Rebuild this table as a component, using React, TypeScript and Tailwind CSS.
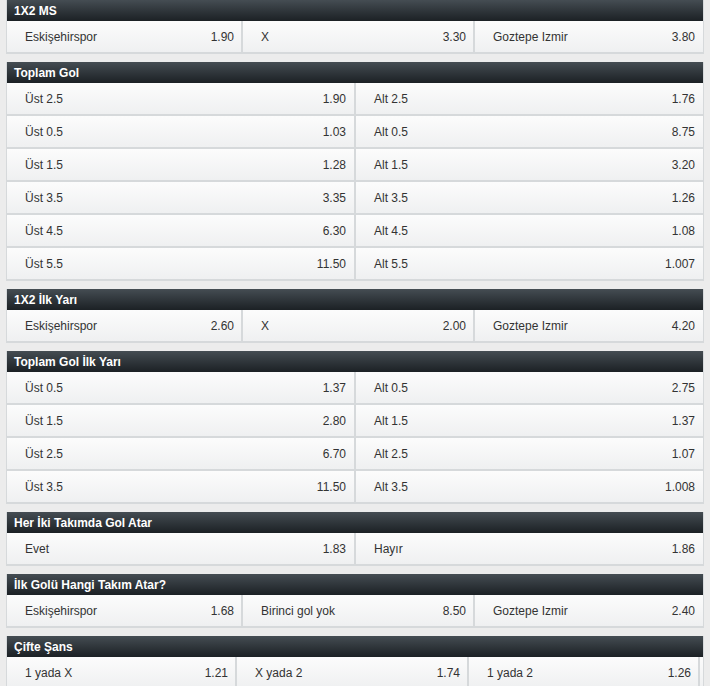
import React from "react";

type Cell = { label: string; odd: string };

const Header = ({ title }: { title: string }) => (
  <div className="h-[21px] flex items-center pl-[7px] bg-gradient-to-b from-[#454d53] to-[#1c2125] text-white font-bold text-[12px] leading-none">
    {title}
  </div>
);

const CellView = ({ c, cls }: { c: Cell; cls: string }) => (
  <div className={"flex items-center justify-between pl-[18px] pr-[7px] " + cls}>
    <span>{c.label}</span>
    <span>{c.odd}</span>
  </div>
);

const Row3 = ({ cells, alt }: { cells: Cell[]; alt?: boolean }) => (
  <div className="flex h-[33px] border-b-2 border-[#d6d9db] bg-gradient-to-b from-[#fcfcfc] to-[#eff0f1]">
    {alt ? (
      <>
        <CellView c={cells[0]} cls="w-[230px] border-r-2 border-[#d6d9db]" />
        <CellView c={cells[1]} cls="w-[232px] border-r-2 border-[#d6d9db]" />
        <CellView c={cells[2]} cls="w-[231px] border-r-2 border-[#d6d9db]" />
        <div className="flex-1" />
      </>
    ) : (
      <>
        <CellView c={cells[0]} cls="w-[236px] border-r-2 border-[#d6d9db]" />
        <CellView c={cells[1]} cls="w-[232px] border-r-2 border-[#d6d9db]" />
        <CellView c={cells[2]} cls="flex-1 pr-[8px]" />
      </>
    )}
  </div>
);

const Row2 = ({ a, b }: { a: Cell; b: Cell }) => (
  <div className="flex h-[33px] border-b-2 border-[#d6d9db] bg-gradient-to-b from-[#fcfcfc] to-[#eff0f1]">
    <CellView c={a} cls="w-[349px] border-r-2 border-[#d6d9db] pr-[8px]" />
    <CellView c={b} cls="flex-1 pr-[8px]" />
  </div>
);

const c = (label: string, odd: string): Cell => ({ label, odd });

export default function App() {
  const toplam: [Cell, Cell][] = [
    [c("Üst 2.5", "1.90"), c("Alt 2.5", "1.76")],
    [c("Üst 0.5", "1.03"), c("Alt 0.5", "8.75")],
    [c("Üst 1.5", "1.28"), c("Alt 1.5", "3.20")],
    [c("Üst 3.5", "3.35"), c("Alt 3.5", "1.26")],
    [c("Üst 4.5", "6.30"), c("Alt 4.5", "1.08")],
    [c("Üst 5.5", "11.50"), c("Alt 5.5", "1.007")],
  ];
  const ilkYari: [Cell, Cell][] = [
    [c("Üst 0.5", "1.37"), c("Alt 0.5", "2.75")],
    [c("Üst 1.5", "2.80"), c("Alt 1.5", "1.37")],
    [c("Üst 2.5", "6.70"), c("Alt 2.5", "1.07")],
    [c("Üst 3.5", "11.50"), c("Alt 3.5", "1.008")],
  ];
  return (
    <div
      className="w-[710px] h-[686px] overflow-hidden bg-[#ececec] px-[6px] text-[12px] text-[#333]"
      style={{ fontFamily: '"Liberation Sans", Arial, sans-serif' }}
    >
      <div className="flex flex-col gap-[8px]">
        <div className="border-x border-[#d6d9db]">
          <Header title="1X2 MS" />
          <Row3 cells={[c("Eskişehirspor", "1.90"), c("X", "3.30"), c("Goztepe Izmir", "3.80")]} />
        </div>
        <div className="border-x border-[#d6d9db]">
          <Header title="Toplam Gol" />
          {toplam.map(([a, b], i) => (
            <Row2 key={i} a={a} b={b} />
          ))}
        </div>
        <div className="border-x border-[#d6d9db]">
          <Header title="1X2 İlk Yarı" />
          <Row3 cells={[c("Eskişehirspor", "2.60"), c("X", "2.00"), c("Goztepe Izmir", "4.20")]} />
        </div>
        <div className="border-x border-[#d6d9db]">
          <Header title="Toplam Gol İlk Yarı" />
          {ilkYari.map(([a, b], i) => (
            <Row2 key={i} a={a} b={b} />
          ))}
        </div>
        <div className="border-x border-[#d6d9db]">
          <Header title="Her İki Takımda Gol Atar" />
          <Row2 a={c("Evet", "1.83")} b={c("Hayır", "1.86")} />
        </div>
        <div className="border-x border-[#d6d9db]">
          <Header title="İlk Golü Hangi Takım Atar?" />
          <Row3 cells={[c("Eskişehirspor", "1.68"), c("Birinci gol yok", "8.50"), c("Goztepe Izmir", "2.40")]} />
        </div>
        <div className="border-x border-[#d6d9db]">
          <Header title="Çifte Şans" />
          <Row3 alt cells={[c("1 yada X", "1.21"), c("X yada 2", "1.74"), c("1 yada 2", "1.26")]} />
        </div>
      </div>
    </div>
  );
}
